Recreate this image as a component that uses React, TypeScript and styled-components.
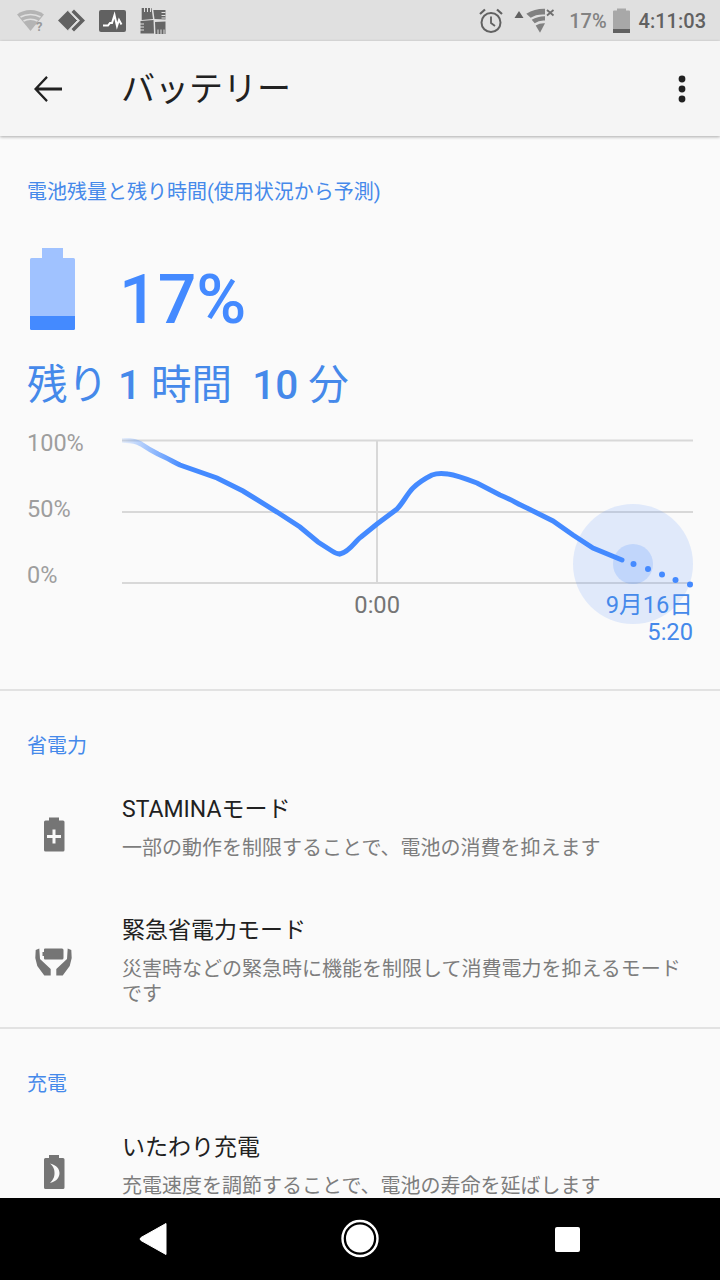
import React from "react";
import styled, { createGlobalStyle } from "styled-components";

const Global = createGlobalStyle`
  html, body { margin: 0; padding: 0; background: #fafafa; }
  #root { width: 720px; height: 1280px; overflow: hidden; }
  * { box-sizing: border-box; }
`;

const FONT = `Roboto, "Noto Sans CJK JP", sans-serif`;
const BLUE = "#448aff";
const SOFT_BLUE = "#4589ea";

const Screen = styled.div`
  width: 720px;
  height: 1280px;
  display: flex;
  flex-direction: column;
  background: #fafafa;
  font-family: ${FONT};
`;

const StatusBar = styled.div`
  height: 41px;
  flex: none;
  background: #e0e0e0;
  display: flex;
  align-items: center;
  padding: 0 14px 0 17px;
  color: #6b6b6b;
`;
const StatusGroup = styled.div`
  display: flex;
  align-items: center;
`;
const Spacer = styled.div`
  flex: 1;
`;
const StatusPct = styled.span`
  font-size: 20px;
  font-weight: 500;
  color: #828282;
  margin-left: 13px;
`;
const StatusClock = styled.span`
  font-size: 20px;
  font-weight: 500;
  color: #616161;
  margin-left: 9px;
`;
const StatusSvg = styled.svg<{ $ml?: number }>`
  display: block;
  flex: none;
  margin-left: ${(p) => p.$ml ?? 0}px;
`;

const AppBar = styled.header`
  height: 95px;
  flex: none;
  background: #f5f5f5;
  display: flex;
  align-items: center;
  position: relative;
  z-index: 2;
  box-shadow: 0 1px 3px rgba(0, 0, 0, 0.32);
  padding: 0 33px 0 27px;
`;
const Title = styled.h1`
  margin: 0 0 0 52px;
  font-size: 34px;
  line-height: 48px;
  font-weight: 400;
  color: #212121;
  flex: 1;
`;

const Content = styled.main`
  flex: 1;
  min-height: 0;
  overflow: hidden;
`;
const Section = styled.section`
  padding-top: 40px;
  border-bottom: 2px solid #e2e2e2;
`;
const OpenSection = styled.section`
  padding-top: 40px;
`;
const Heading = styled.h2`
  margin: 0;
  padding-left: 27px;
  font-size: 20px;
  line-height: 30px;
  font-weight: 400;
  color: ${SOFT_BLUE};
`;
const BatterySection = styled.section`
  padding-top: 41px;
  height: 555px;
  border-bottom: 2px solid #e2e2e2;
`;
const LevelRow = styled.div`
  margin-top: 41px;
  padding-left: 30px;
  display: flex;
  align-items: flex-start;
  gap: 44px;
`;
const LevelValue = styled.div`
  height: 82px;
  padding-top: 11px;
  font-size: 68px;
  line-height: 82px;
  font-weight: 500;
  color: ${BLUE};
`;
const Remaining = styled.div`
  margin-top: 30px;
  padding-left: 27px;
  font-size: 40.5px;
  line-height: 50px;
  color: ${SOFT_BLUE};
  white-space: pre;
`;
const RemainingNum = styled.span`
  font-weight: 500;
`;

const Chart = styled.div`
  margin-top: 18px;
  position: relative;
  display: grid;
  grid-template-columns: 122px 598px;
`;
const YAxis = styled.div`
  padding-left: 27px;
  display: flex;
  flex-direction: column;
`;
const YLabel = styled.div`
  height: 66px;
  font-size: 23.5px;
  line-height: 30px;
  color: #9e9e9e;
`;
const Plot = styled.svg`
  display: block;
  width: 598px;
  height: 262px;
`;
const TimeLabel = styled.div<{ $color: string; $top: number; $right: number }>`
  position: absolute;
  top: ${(p) => p.$top}px;
  right: ${(p) => p.$right}px;
  font-size: 23.7px;
  line-height: 28px;
  color: ${(p) => p.$color};
`;

const List = styled.div`
  margin-top: 6px;
  display: flex;
  flex-direction: column;
  gap: 7px;
`;
const Row = styled.div`
  display: flex;
  align-items: center;
  padding: 28px 30px 20px 30px;
`;
const IconBox = styled.svg`
  width: 48px;
  height: 48px;
  flex: none;
  margin-right: 44px;
  overflow: visible;
`;
const RowText = styled.div`
  min-width: 0;
  flex: 1;
`;
const RowTitle = styled.div`
  font-size: 23px;
  line-height: 30px;
  color: #212121;
`;
const RowDesc = styled.div`
  margin-top: 11px;
  font-size: 20px;
  line-height: 25px;
  color: #7d7d7d;
`;

const NavBar = styled.nav`
  height: 82px;
  flex: none;
  background: #000;
  position: relative;
  z-index: 3;
`;
const NavArt = styled.svg`
  display: block;
  width: 720px;
  height: 82px;
`;

const curve =
  "M340 554 C350 552 355 541 361 537 L377 524 L397 509 C403 503 407 494 413 488 C420 481 426 478 432 475 C437 473 442 473 448 474 C455 475 464 478 477 483 L500 495 C510 499 518 504 527 508 L553 521 L573 535 L593 548 L622 560";
const curveStart =
  "M122 440.5 C130 440 136 441 141 444 C147 448 152 451 158 454 C165 457 172 461 180 465 L217 478 L243 491 L277 512 L300 527 L318 542 L332 551 C335 553 337 554 340 554";

const sections = {
  power: [
    {
      title: "STAMINAモード",
      desc: "一部の動作を制限することで、電池の消費を抑えます",
      icon: (
        <>
          <path d="M19 13.5h10v3h4a1.5 1.5 0 0 1 1.5 1.5v28a1.5 1.5 0 0 1-1.5 1.5H15.5a1.5 1.5 0 0 1-1.500-1.500V18a1.500 1.500 0 0 1 1.500-1.500h3.500z" fill="#757575" />
          <path d="M17 32.500h14M24 25.500v14" stroke="#fafafa" strokeWidth="3" fill="none" />
        </>
      ),
    },
    {
      title: "緊急省電力モード",
      desc: "災害時などの緊急時に機能を制限して消費電力を抑えるモード です",
      icon: (
        <>
          <path d="M15 10.500h17a1.500 1.500 0 0 1 1.500 1.500v8a1.500 1.500 0 0 1-1.500 1.500H15a1 1 0 0 1-1-1v-2.500h-1.500v-4H14V11.500a1 1 0 0 1 1-1z" fill="#757575" />
          <path d="M5.700 12 L9.300 10.500 L10 21 L20.700 31 V37.500 H14.300 L7.300 28 L5.300 20 Z" fill="#757575" />
          <path d="M41.300 12 L37.700 10.500 L37 21 L26.300 31 V37.500 H32.700 L39.700 28 L41.700 20 Z" fill="#757575" />
        </>
      ),
    },
  ],
  charge: [
    {
      title: "いたわり充電",
      desc: "充電速度を調節することで、電池の寿命を延ばします",
      icon: (
        <>
          <path d="M19 13h10v3h4a1.500 1.500 0 0 1 1.500 1.500v28a1.500 1.500 0 0 1-1.500 1.500H15.500a1.500 1.500 0 0 1-1.500-1.500v-28A1.500 1.500 0 0 1 15.500 16H19z" fill="#757575" />
          <path d="M20 21.500 C27 23 29.500 27.500 29.500 31 C29.500 35 27 39.500 20 41 C24 37 24.500 34 24.500 31 C24.500 28 24 25 20 21.500 Z" fill="#fafafa" />
        </>
      ),
    },
  ],
};

export default function App() {
  return (
    <Screen>
      <Global />
      <StatusBar>
        <StatusGroup>
          <StatusSvg width="28" height="24" viewBox="0 0 28 24">
            <path d="M0 5.500 C7 -0.500 20 -0.500 27 5.500 L13.500 22 Z" fill="#b4b4b4" />
            <path d="M3.500 8 C9 4.500 18 4.500 23.500 8M6.500 12 C10.500 9.500 16.500 9.500 20.500 12" stroke="#e0e0e0" strokeWidth="1.500" fill="none" />
            <text x="19" y="22" fontSize="13" fontWeight="700" fill="#9a9a9a" fontFamily="Roboto, sans-serif">?</text>
          </StatusSvg>
          <StatusSvg $ml={12} width="29" height="24" viewBox="0 0 29 24">
            <path d="M11 1.500 L20.500 11.500 L11 21.500 L1 11.500 Z" fill="#616161" />
            <path d="M17 0.500 L28 11.500 L17 22.500 L14.500 20 L23 11.500 L14.500 3 Z" fill="#616161" />
            <path d="M11 1.500 L20.500 11.500 L11 21.500" fill="none" stroke="#e0e0e0" strokeWidth="1" />
          </StatusSvg>
          <StatusSvg $ml={13} width="28" height="24" viewBox="0 0 28 24">
            <rect x="0" y="1" width="27" height="22" rx="2" fill="#616161" />
            <path d="M4 16.500h5l2-2.500h2l2.500-8 2.500 11 2-6 2.500 4.500" fill="none" stroke="#fff" strokeWidth="2" />
          </StatusSvg>
          <StatusSvg $ml={13} width="28" height="28" viewBox="0 0 28 28">
            <path d="M1.700 1 H11.500 L13 12 L1.700 13 Z M13.300 3 H25.500 V12.500 L14.500 12 Z M0.500 14 L13.500 13 L14 26.500 H0.500 Z M15 15 L25.500 14.500 V27 H15.500 Z" fill="#666" />
            <path d="M4.500 1v4M7.500 1v4M10.500 1v4M21.500 5.500h4M21.500 8.500h4M21.500 11h4M0 17h4M0 20h4M0 23h4M18 22.500v4.500M21 22.500v4.500M24 22.500v4.500" stroke="#e0e0e0" strokeWidth="1" />
          </StatusSvg>
        </StatusGroup>
        <Spacer />
        <StatusGroup>
          <StatusSvg width="26" height="26" viewBox="0 0 26 26">
            <circle cx="13" cy="14.500" r="9.500" fill="none" stroke="#616161" strokeWidth="2" />
            <path d="M13 8.500v6.500l4 3" fill="none" stroke="#616161" strokeWidth="1.800" />
            <path d="M2 6 L7 1.500M24 6 L19 1.500" stroke="#616161" strokeWidth="2.200" />
          </StatusSvg>
          <StatusSvg $ml={10} width="10" height="26" viewBox="0 0 10 26">
            <path d="M5 3 L9.500 10 H0.500 Z" fill="#616161" />
          </StatusSvg>
          <StatusSvg $ml={2} width="30" height="28" viewBox="0 0 30 28">
            <path d="M0.300 6.800 Q9 1.500 19 1.800 V7.500 Q10 7 4.700 10.800 Z" fill="#808080" />
            <path d="M5.700 12.800 Q12 9 19 9.200 V13.500 Q13 13 8.700 16.200 Z" fill="#808080" />
            <path d="M9.700 18.500 Q14 15.800 19 16.200 L14 25.800 Z" fill="#808080" />
            <path d="M21 3 L27.500 8.500M27.500 3 L21 8.500" stroke="#6e6e6e" strokeWidth="1.800" />
          </StatusSvg>
          <StatusPct>17%</StatusPct>
          <StatusSvg $ml={6} width="17" height="26" viewBox="0 0 17 26">
            <path d="M4 0.500h9v2h3a1 1 0 0 1 1 1V25H0V3.500a1 1 0 0 1 1-1h3z" fill="#a8a8a8" />
            <rect x="0" y="21" width="17" height="4" fill="#616161" />
          </StatusSvg>
          <StatusClock>4:11:03</StatusClock>
        </StatusGroup>
      </StatusBar>

      <AppBar>
        <StatusSvg width="42" height="42" viewBox="0 0 24 24">
          <path d="M20 11.200H6.600l5.300-5.600L11 4.600 4 12l7 7.400.9-1L6.600 12.800H20z" fill="#212121" />
        </StatusSvg>
        <Title>バッテリー</Title>
        <StatusSvg width="10" height="30" viewBox="0 0 10 30">
          <circle cx="5" cy="5" r="3.400" fill="#212121" />
          <circle cx="5" cy="15" r="3.400" fill="#212121" />
          <circle cx="5" cy="25" r="3.400" fill="#212121" />
        </StatusSvg>
      </AppBar>

      <Content>
        <BatterySection>
          <Heading>電池残量と残り時間(使用状況から予測)</Heading>
          <LevelRow>
            <StatusSvg width="45" height="82" viewBox="0 0 45 82">
              <path d="M12 0h21v10h10.500a1.500 1.500 0 0 1 1.500 1.500V68H0V11.500A1.500 1.500 0 0 1 1.500 10H12z" fill="#a0c2ff" />
              <path d="M0 68h45v12.500a1.500 1.500 0 0 1-1.500 1.500H1.500A1.500 1.500 0 0 1 0 80.500z" fill={BLUE} />
            </StatusSvg>
            <LevelValue>17%</LevelValue>
          </LevelRow>
          <Remaining>
            残り <RemainingNum>1</RemainingNum> 時間  <RemainingNum>10</RemainingNum> 分
          </Remaining>
          <Chart>
            <YAxis>
              <YLabel>100%</YLabel>
              <YLabel>50%</YLabel>
              <YLabel>0%</YLabel>
            </YAxis>
            <Plot viewBox="122 428 598 262">
              <defs>
                <linearGradient id="fade" gradientUnits="userSpaceOnUse" x1="122" y1="0" x2="182" y2="0">
                  <stop offset="0" stopColor={BLUE} stopOpacity="0.1" />
                  <stop offset="1" stopColor={BLUE} />
                </linearGradient>
              </defs>
              <path d="M122 440.500H693M122 512H693M122 583H693M377 440V583" stroke="#d8d8d8" strokeWidth="2" fill="none" />
              <circle cx="633" cy="564" r="60" fill={BLUE} fillOpacity="0.14" />
              <circle cx="633" cy="564" r="20" fill={BLUE} fillOpacity="0.2" />
              <path d={curveStart} stroke="url(#fade)" strokeWidth="5" fill="none" />
              <path d={curve} stroke={BLUE} strokeWidth="5" fill="none" strokeLinecap="round" />
              <g fill={BLUE}>
                <circle cx="633.500" cy="564" r="3" />
                <circle cx="648" cy="569" r="3" />
                <circle cx="662" cy="574.500" r="3" />
                <circle cx="675.500" cy="580" r="3" />
                <circle cx="690" cy="584.500" r="3" />
              </g>
            </Plot>
            <TimeLabel $color="#757575" $top={163} $right={320}>0:00</TimeLabel>
            <TimeLabel $color={SOFT_BLUE} $top={163} $right={27}>9月16日</TimeLabel>
            <TimeLabel $color={SOFT_BLUE} $top={190} $right={27}>5:20</TimeLabel>
          </Chart>
        </BatterySection>

        <Section>
          <Heading>省電力</Heading>
          <List>
            {sections.power.map((r) => (
              <Row key={r.title}>
                <IconBox viewBox="0 0 48 48">{r.icon}</IconBox>
                <RowText>
                  <RowTitle>{r.title}</RowTitle>
                  <RowDesc>{r.desc}</RowDesc>
                </RowText>
              </Row>
            ))}
          </List>
        </Section>

        <OpenSection>
          <Heading>充電</Heading>
          <List>
            {sections.charge.map((r) => (
              <Row key={r.title}>
                <IconBox viewBox="0 0 48 48">{r.icon}</IconBox>
                <RowText>
                  <RowTitle>{r.title}</RowTitle>
                  <RowDesc>{r.desc}</RowDesc>
                </RowText>
              </Row>
            ))}
          </List>
        </OpenSection>
      </Content>

      <NavBar>
        <NavArt viewBox="0 1198 720 82">
          <path d="M166 1223.500 V1254.500 L141 1240.500 Q139 1239 141 1237.500 Z" fill="#fff" stroke="#fff" strokeWidth="1" strokeLinejoin="round" />
          <circle cx="360" cy="1238.500" r="17.500" fill="none" stroke="#fff" strokeWidth="2.400" />
          <circle cx="360" cy="1238.500" r="14" fill="#fff" />
          <rect x="555" y="1227" width="25" height="25" rx="2" fill="#fff" />
        </NavArt>
      </NavBar>
    </Screen>
  );
}
